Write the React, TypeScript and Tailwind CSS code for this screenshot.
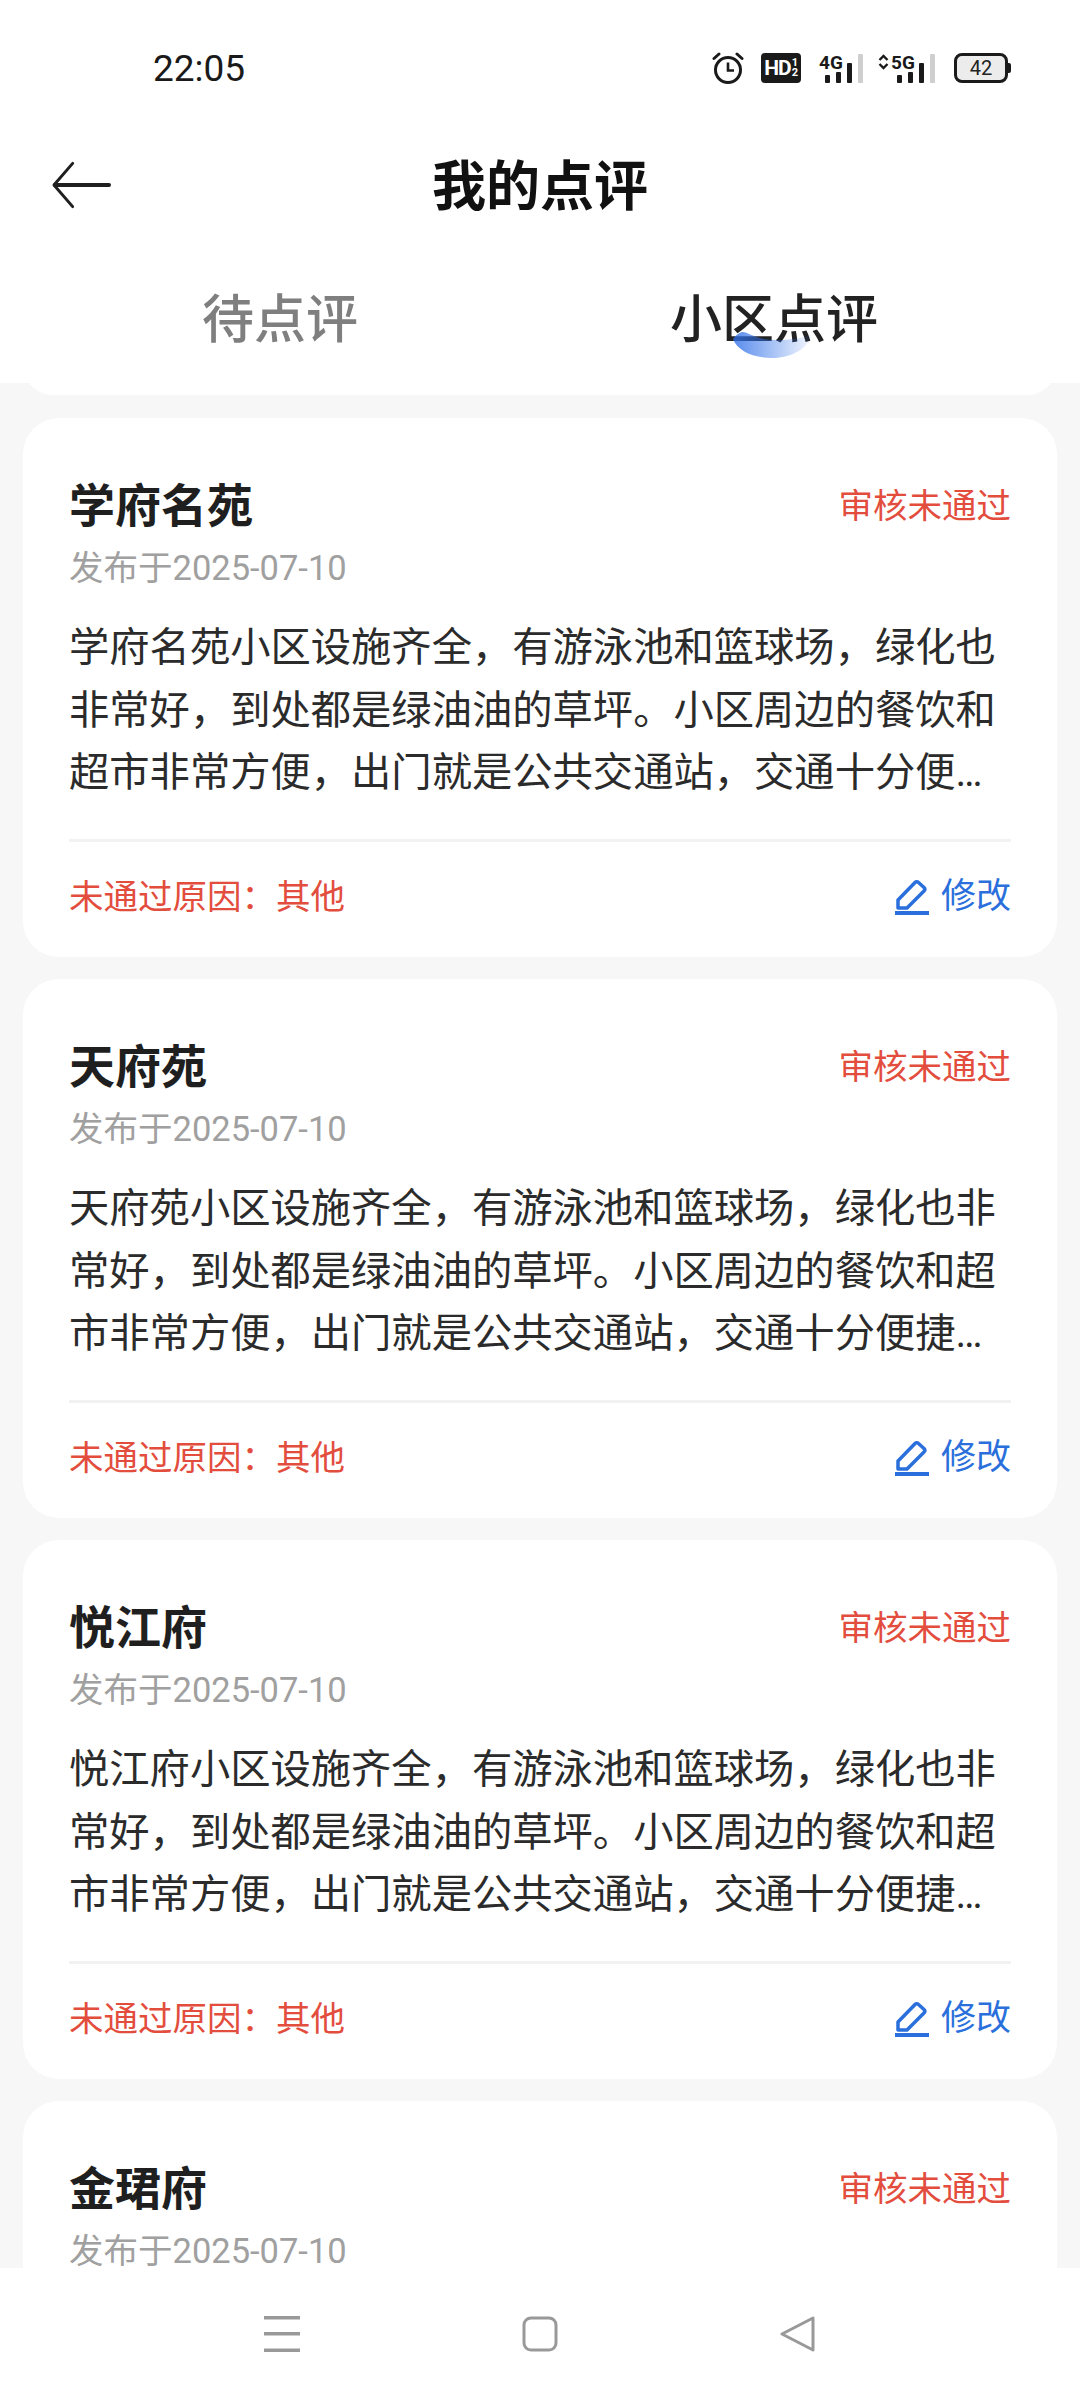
const reviews = [
    { name: '学府名苑', text: '学府名苑小区设施齐全，有游泳池和篮球场，绿化也非常好，到处都是绿油油的草坪。小区周边的餐饮和超市非常方便，出门就是公共交通站，交通十分便捷，生活非常舒适，值得推荐给大家。' },
    { name: '天府苑', text: '天府苑小区设施齐全，有游泳池和篮球场，绿化也非常好，到处都是绿油油的草坪。小区周边的餐饮和超市非常方便，出门就是公共交通站，交通十分便捷，生活非常舒适，值得推荐给大家。' },
    { name: '悦江府', text: '悦江府小区设施齐全，有游泳池和篮球场，绿化也非常好，到处都是绿油油的草坪。小区周边的餐饮和超市非常方便，出门就是公共交通站，交通十分便捷，生活非常舒适，值得推荐给大家。' },
    { name: '金珺府', text: '金珺府小区设施齐全，有游泳池和篮球场，绿化也非常好，到处都是绿油油的草坪。小区周边的餐饮和超市非常方便，出门就是公共交通站，交通十分便捷，生活非常舒适，值得推荐给大家。' },
];

function SignalBars() {
    return (
        <div className='flex h-[30px] items-end gap-[6.5px]'>
            <div className='h-[8px] w-[4.5px] rounded-[1px] bg-[#1a1a1a]' />
            <div className='h-[11px] w-[4.5px] rounded-[1px] bg-[#1a1a1a]' />
            <div className='h-[20px] w-[4.5px] rounded-[1px] bg-[#1a1a1a]' />
            <div className='h-[29px] w-[4.5px] rounded-[1px] bg-[#cfcfcf]' />
        </div>
    );
}

function StatusIcons() {
    return (
        <div className='flex items-center text-[#1a1a1a]'>
            <svg width='32' height='34' viewBox='0 0 32 34' fill='none' stroke='currentColor' strokeWidth='3'>
                <circle cx='16' cy='19' r='12.5' />
                <path d='M16 11.5V19.5H22' strokeWidth='2.6' />
                <path d='M2 7.5L7 3M30 7.5L25 3' strokeLinecap='round' strokeWidth='3' />
            </svg>
            <div className='ml-[17px] flex h-[30px] w-[40px] items-center justify-center rounded-[4px] bg-[#1a1a1a] text-[21px] leading-none font-bold tracking-[-1px] text-white'>
                HD<span className='ml-[1px] w-[6px] text-[11px] leading-[10px] break-all'>12</span>
            </div>
            <div className='relative ml-[18px] h-[30px] w-[44px]'>
                <span className='absolute top-0 left-0 text-[19px] leading-[20px] font-bold'>4G</span>
                <div className='absolute top-0 left-[6px]'><SignalBars /></div>
            </div>
            <div className='relative ml-[15px] h-[30px] w-[58px]'>
                <svg className='absolute top-[1px] left-0' width='11' height='16' viewBox='0 0 11 16' fill='none' stroke='currentColor' strokeWidth='2.4'>
                    <path d='M1.5 6L5.5 2L9.5 6M1.5 10L5.5 14L9.5 10' />
                </svg>
                <span className='absolute top-0 left-[13px] text-[19px] leading-[20px] font-bold'>5G</span>
                <div className='absolute top-0 left-[19px]'><SignalBars /></div>
            </div>
            <div className='ml-[18px] flex items-center'>
                <div className='flex h-[30px] w-[54px] items-center justify-center rounded-[8px] border-[3px] border-[#1a1a1a] bg-[#ececec] text-[20px] leading-none text-[#222]'>42</div>
                <div className='h-[10px] w-[3px] rounded-r-[2px] bg-[#1a1a1a]' />
            </div>
        </div>
    );
}

function ReviewCard({ name, text }: { name: string; text: string }) {
    return (
        <div className='shrink-0 rounded-[36px] bg-white px-[46px] pt-[56px] pb-[35.5px]'>
            <div className='flex items-start justify-between'>
                <h2 className='text-[46px] leading-[64px] font-bold text-[#1f1f1f]'>{name}</h2>
                <span className='mt-[7px] text-[34.5px] leading-[50px] text-[#e34d3d]'>审核未通过</span>
            </div>
            <p className='mt-[5px] text-[34.5px] leading-[50px] text-[#a0a0a0]'>发布于2025-07-10</p>
            <p className='mt-[24px] line-clamp-3 text-[40.3px] leading-[62.5px] text-[#2b2b2b]'>{text}</p>
            <div className='mt-[34px] h-[3px] bg-[#f2f2f2]' />
            <div className='mt-[30px] flex items-center justify-between'>
                <span className='text-[34.5px] leading-[50px] text-[#e34d3d]'>未通过原因：其他</span>
                <div className='flex items-center gap-[12px] text-[#2a6fdb]'>
                    <svg width='34' height='36' viewBox='0 0 34 36' fill='none' stroke='currentColor' strokeWidth='3.5' strokeLinejoin='round'>
                        <path d='M3 21L20 3.5C21 2.5 22.5 2.5 23.5 3.5L29 8.5C30 9.5 30 11 29 12L12 29H3Z' />
                        <path d='M0 34H34' strokeWidth='4' />
                    </svg>
                    <span className='text-[35px] leading-[50px]'>修改</span>
                </div>
            </div>
        </div>
    );
}

export default function App() {
    return (
        <div className='flex h-[2400px] w-[1080px] flex-col overflow-hidden bg-[#f7f7f7] font-["Roboto","Noto_Sans_CJK_SC",sans-serif]'>
            <div className='shrink-0 bg-white'>
                <div className='flex h-[136px] items-center justify-between pr-[69px] pl-[153px]'>
                    <span className='mt-[2px] text-[37px] text-[#1a1a1a]'>22:05</span>
                    <StatusIcons />
                </div>
                <div className='grid h-[98px] grid-cols-[1fr_auto_1fr] items-center px-[52px]'>
                    <svg width='59' height='48' viewBox='0 0 60 48' fill='none' stroke='#1f1f1f' strokeWidth='4' strokeLinecap='round' strokeLinejoin='round'>
                        <path d='M21 2L2 24L21 46' strokeWidth='3' />
                        <path d='M3 24H58' />
                    </svg>
                    <h1 className='mt-[5px] text-[54px] leading-none font-bold text-[#111111]'>我的点评</h1>
                    <div />
                </div>
                <div className='grid h-[149px] grid-cols-2 pt-[52px] pr-[59px] pl-[33px]'>
                    <div className='text-center text-[52px] leading-[70px] font-medium text-[#7f7f7f]'>待点评</div>
                    <div className='text-center'>
                        <span className='relative inline-block text-[52px] leading-[70px] font-medium text-[#222222]'>
                            小区点评
                            <svg className='absolute top-[46px] left-[63px]' width='78' height='26' viewBox='0 0 74 26' preserveAspectRatio='none'>
                                <defs>
                                    <linearGradient id='tabBlob' x1='0' y1='0' x2='1' y2='0'>
                                        <stop offset='0' stopColor='#2f6fe8' stopOpacity='0.8' />
                                        <stop offset='1' stopColor='#2f6fe8' stopOpacity='0.06' />
                                    </linearGradient>
                                </defs>
                                <path d='M0 7C4 2 7 0 9 0C15 0 22 8 40 8C54 8 66 6 74 3C72 16 56 26 37 26C18 26 4 18 0 7Z' fill='url(#tabBlob)' />
                            </svg>
                        </span>
                    </div>
                </div>
            </div>

            <div className='flex min-h-0 flex-1 flex-col gap-[22px] overflow-hidden px-[23px]'>
                <div className='mt-[-48px] h-[60px] shrink-0 rounded-[36px] bg-white' />
                <div className='mt-[1px] flex flex-col gap-[22px]'>
                    {reviews.map((review) => (
                        <ReviewCard key={review.name} name={review.name} text={review.text} />
                    ))}
                </div>
            </div>

            <div className='flex h-[132px] shrink-0 items-center justify-center gap-[222px] bg-white'>
                <svg width='36' height='36' viewBox='0 0 36 36' fill='#999999'>
                    <rect y='0' width='36' height='3.5' />
                    <rect y='16' width='36' height='3.5' />
                    <rect y='32.5' width='36' height='3.5' />
                </svg>
                <svg width='36' height='36' viewBox='0 0 36 36' fill='none' stroke='#999999' strokeWidth='3'>
                    <rect x='2' y='2' width='32' height='32' rx='7' />
                </svg>
                <svg width='36' height='36' viewBox='0 0 36 36' fill='none' stroke='#999999' strokeWidth='3' strokeLinejoin='round'>
                    <path d='M33 2V34L2 18Z' />
                </svg>
            </div>
        </div>
    );
}
